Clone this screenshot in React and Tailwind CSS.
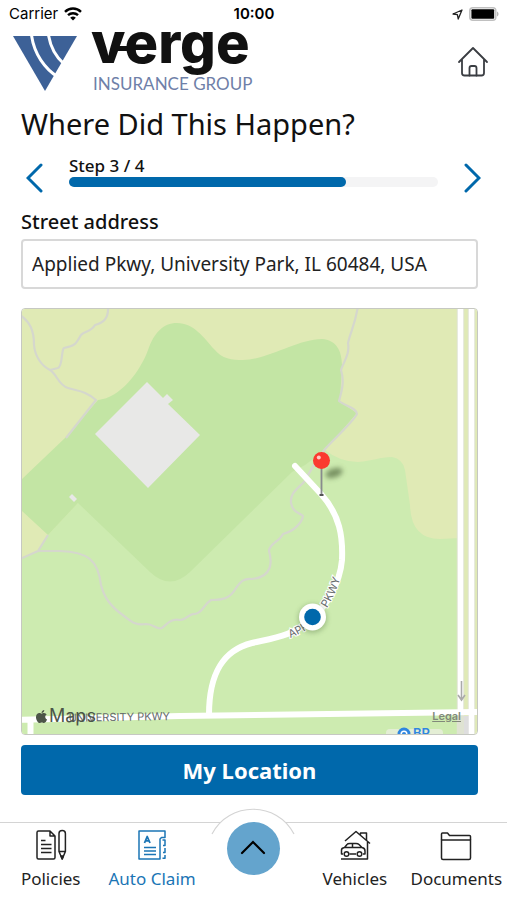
import React, { useState } from "react";
import { FaApple } from "react-icons/fa";

const STEP = 3;
const STEPS = 4;

function StatusBar() {
  return (
    <div className="grid grid-cols-3 items-center h-7 pl-[9px] pr-2 font-['Inter',sans-serif] text-[15px] leading-5 text-black">
      <div className="flex items-center gap-1.5">
        <span>Carrier</span>
        <svg width="18" height="14" viewBox="0 0 18 14" fill="none" stroke="#000" strokeWidth="2.4" aria-hidden="true">
          <path d="M1 4.8a11.4 11.4 0 0 1 16 0" />
          <path d="M4 8.2a7.2 7.2 0 0 1 10 0" />
          <path d="M9 13.6 6.2 10.8a4 4 0 0 1 5.6 0z" fill="#000" stroke="none" />
        </svg>
      </div>
      <span className="text-center font-semibold">10:00</span>
      <div className="flex items-center justify-end gap-1.5">
        <svg width="11" height="11" viewBox="0 0 11 11" fill="none" stroke="#222" strokeWidth="1.3" strokeLinejoin="round" aria-hidden="true">
          <path d="M10 1 1 5l4.400.7L6.200 10z" />
        </svg>
        <svg width="30" height="14" viewBox="0 0 30 14" aria-hidden="true">
          <rect x=".8" y=".8" width="26" height="12.400" rx="3" fill="#fff" stroke="#c0c0c0" strokeWidth="1.500" />
          <rect x="2.400" y="2.200" width="22.800" height="9.600" rx="1" fill="#000" />
          <path d="M28 4.500v5c2-.8 2-4.200 0-5z" fill="#b5b5b5" />
        </svg>
      </div>
    </div>
  );
}

function Header() {
  return (
    <header className="flex items-start justify-between h-16 pl-[13px] pr-[18px]">
      <div className="flex items-start gap-[14px]">
        <svg className="mt-2" width="64" height="55" viewBox="0 0 64 55" aria-hidden="true">
          <path d="M0 0h64L32 55z" fill="#3d6197" />
          <path d="M18.500 -1C21 18 32 33 45 41M35.500 -1C37.500 12 42 20 51 28" fill="none" stroke="#fff" strokeWidth="3" />
        </svg>
        <div className="relative flex flex-col gap-[15px]">
          <span className="-mt-px font-['Inter',sans-serif] text-[56px] leading-8 font-extrabold text-[#111]">verge</span>
          {/* bar that joins the v to the e */}
          <span className="absolute left-[22px] top-[18px] h-[5px] w-4 bg-[#111]" />
          <span className="pl-0.5 font-['Lato',sans-serif] text-[17px] leading-5 text-[#6f80a8]">INSURANCE GROUP</span>
        </div>
      </div>
      <button type="button" aria-label="Home" className="mt-[18px]">
        <svg width="32" height="32" viewBox="0 0 32 32" fill="none" stroke="#3a3d42" strokeWidth="1.800" strokeLinecap="round" strokeLinejoin="round">
          <path d="M2 16 16 2l14 14M5 13.500V27q0 2.500 2.500 2.500h17q2.500 0 2.500-2.500V13.500" />
          <path d="M12.500 29.500V22q0-2 2-2h3q2 0 2 2v7.500" />
        </svg>
      </button>
    </header>
  );
}

function Chevron({ d, label }) {
  return (
    <button type="button" aria-label={label} className="shrink-0">
      <svg width="17" height="30" viewBox="0 0 17 30" fill="none" stroke="#0068ab" strokeWidth="3" strokeLinecap="round">
        <path d={d} />
      </svg>
    </button>
  );
}

function StepProgress() {
  return (
    <div className="flex items-center gap-[26px] pl-[26px] pr-[26px] h-[34px]">
      <Chevron d="M15 2 2 15l13 13" label="Previous step" />
      <div className="flex-1 -mt-3.5">
        <div className="text-[17px] leading-[22px] font-medium">Step {STEP} / {STEPS}</div>
        <div className="h-2.5 rounded-full bg-[#f4f4f5]">
          <div className="h-full rounded-full bg-[#0068ab]" style={{ width: `${(STEP / STEPS) * 100}%` }} />
        </div>
      </div>
      <Chevron d="M2 2l13 13L2 28" label="Next step" />
    </div>
  );
}

function MapDrawing() {
  return (
    <svg className="absolute inset-0 w-full h-full" viewBox="22 309 455 425" preserveAspectRatio="xMidYMid slice" aria-hidden="true">
      <defs>
        <filter id="soft" x="-50%" y="-100%" width="200%" height="300%">
          <feGaussianBlur stdDeviation="2.500" />
        </filter>
        <path id="applied" d="M290 638C308 631 318 622 325 611Q337 594 344 565" />
      </defs>

      {/* land */}
      <path d="M0 290H520V760H0z" fill="#e0eab5" />
      <path d="M0 566 21 558 38 551 48 535 78 503 290 470 325 450Q340 462 358 462C372 461 380 457 392 457Q403 459 405 470L410 505Q411 539 440 539L460 538V740H0z" fill="#cdebb0" />
      <path d="M0 500 21 480 65 438 98 400C120 398 140 372 148 350C154 333 163 323 177 323C194 323 204 338 214 349C222 359 232 360 243 360C270 359 298 339 322 339C336 340 342 350 342 366L340 401Q347 407 357 413L325 450 305 465 292 472 190 572Q170 591 150 572L78 503 48 535 21 510 0 490z" fill="#c3e5a4" />
      <path d="M147 382 163 398 167 394 173 400 168 404 200 435 148 488 95 434z" fill="#e8e8e7" />
      <path d="M69 497 72 494 77 499 74 502z" fill="#e8e8e7" />

      {/* footpaths */}
      <g fill="none" stroke="#d5d7cd" strokeWidth="2.200" strokeLinejoin="round">
        <path d="M20 315C30 322 34 330 34 345C35 357 42 366 50 370C57 374 58 385 68 388S86 391 96 400L66 438" />
        <path d="M108 306C109 320 102 323 95 325C91 332 84 331 81 335C76 344 75 346 64 348C61 350 63 366 58 368L50 370" />
        <path d="M358 306C355 325 351 330 348 343C350 354 344 361 341 370C345 383 341 393 339 401C345 406 357 408 357 414C353 422 333 440 325 449C316 460 310 472 304 482C297 489 290 493 291 503C293 513 299 512 303 516C302 522 295 531 283 534C279 542 269 544 269 551C272 561 273 577 252 579C242 578 240 583 236 588C230 599 222 600 211 600C203 605 203 613 195 614C189 613 187 620 180 620C171 618 166 625 162 628C156 630 154 624 146 624C135 626 131 621 124 616C110 606 104 597 101 585C98 560 88 552 60 551H38L20 559M38 551 48 535" />
      </g>

      {/* roads */}
      <g fill="none" stroke="#dfe3d2" strokeWidth="7.500">
        <path d="M460.500 300V740M471.500 300V740" />
      </g>
      <path d="M464 716h7v22h-7z" fill="#dedede" />
      <g fill="none" stroke="#fff" strokeWidth="6">
        <path d="M460.500 300V714M471.500 300V740" strokeWidth="5.500" />
        <path d="M16 720 180 716 477 712M30.500 720V740" />
        <path d="M295 466 321 494C340 515 343 537 342 560C340 583 326 607 312 618C296 636 268 639 252 643C224 650 209 672 209 715" strokeLinecap="round" />
      </g>
      <path d="M461.500 681V700M458 695l3.500 5 3.500-5" fill="none" stroke="#aaa" strokeWidth="1.600" />

      {/* road names */}
      <g fontFamily="Inter, sans-serif" fontSize="11" fill="#666a6c" stroke="#fff" strokeWidth="2" paintOrder="stroke">
        <text><textPath href="#applied">APPLIED PKWY</textPath></text>
        <text x="170" y="720" textAnchor="end" transform="rotate(-1 170 720)" strokeWidth="0">UNIVERSITY PKWY</text>
      </g>

      {/* BP stop */}
      <rect x="386" y="729" width="57" height="12" rx="4" fill="#e4eed5" />
      <circle cx="404" cy="734" r="6.500" fill="#2f86e0" />
      <circle cx="404" cy="734" r="2.800" fill="none" stroke="#fff" strokeWidth="1.500" />
      <text x="413" y="738" fontFamily="Inter, sans-serif" fontSize="13" fontWeight="600" fill="#2f86e0">BP</text>

      {/* pin */}
      <ellipse cx="334" cy="473" rx="9" ry="4.500" fill="#5d7448" opacity=".75" filter="url(#soft)" transform="rotate(-18 334 473)" />
      <path d="M321.500 466V495" stroke="#888b8d" strokeWidth="1.800" />
      <path d="M319.500 495h4" stroke="#555" strokeWidth="2" />
      <circle cx="321.500" cy="460.500" r="8.500" fill="#fb3a30" />
      <circle cx="318.800" cy="457.500" r="2" fill="#ffc9c4" />

      {/* current position */}
      <circle cx="312.500" cy="618.500" r="14.500" fill="#4b6b3a" opacity=".35" filter="url(#soft)" />
      <circle cx="312.500" cy="617" r="13.500" fill="#fff" />
      <circle cx="312.500" cy="617" r="8.300" fill="#0068ab" />
    </svg>
  );
}

function LocationMap() {
  return (
    <div className="relative h-[427px] overflow-hidden rounded border border-[#c6c8c2]">
      <MapDrawing />
      <div className="absolute left-3 bottom-2 flex items-center font-['Inter',sans-serif] text-[18px] leading-5 text-[#4c5548]">
        <FaApple className="size-[15px]" aria-hidden="true" />
        <span>Maps</span>
      </div>
      <a href="#legal" className="absolute right-4 bottom-2 font-['Inter',sans-serif] text-[11px] leading-5 font-semibold text-[#81897a] underline">
        Legal
      </a>
    </div>
  );
}

function PoliciesIcon() {
  return (
    <svg width="32" height="32" viewBox="0 0 32 32" fill="none" stroke="#222" strokeWidth="1.500" strokeLinejoin="round" aria-hidden="true">
      <path d="M15 2H3.500Q2 2 2 3.500v25Q2 30 3.500 30h15q1.500 0 1.500-1.500V7zM15 2v5h5" />
      <path d="M6 11.500h4.500M6 15.500h10.500M6 19.500h10.500M6 23.500h10.500" />
      <path d="M24 22.500V4.500q0-3 3.200-3t3.200 3v18L27.200 30zM24 22.500h6.400" />
      <path d="m26 27 1.200 3 1.200-3z" fill="#222" />
    </svg>
  );
}

function ClaimIcon() {
  return (
    <svg width="32" height="32" viewBox="0 0 32 32" fill="none" stroke="#1b75b5" strokeWidth="1.500" strokeLinejoin="round" aria-hidden="true">
      <path d="M29 8.500V2H3v28h21V10l1.500-1.500z" />
      <path d="M26.500 11H29v5.500h-2M29 19v4.500h-2M29 26v3.200h-2.500" />
      <path d="M8 18.500h12M8 22h12M8 25.500h12" />
      <path d="m8.500 14 2.700-6.500L14 14M9.500 11.800h3.500" strokeWidth="1.800" />
    </svg>
  );
}

function VehiclesIcon() {
  return (
    <svg width="32" height="32" viewBox="0 0 32 32" fill="none" stroke="#222" strokeWidth="1.500" strokeLinejoin="round" aria-hidden="true">
      <path d="M6 12 17 2.500 31 14.500M21.500 5.500V4h6v7.500M28.500 13v17H2" />
      <path d="M4 25H2.500v-4q0-2 3-2.500l2.500-3Q8.500 14.500 11 14.500h6q2 0 3 1l3 3q3 .5 3 3.500v3h-2M6 18.500h17M13.500 14.500v4M10.500 25h6.500" />
      <circle cx="7.500" cy="25" r="2.300" />
      <circle cx="20.500" cy="25" r="2.300" />
    </svg>
  );
}

function DocumentsIcon() {
  return (
    <svg width="32" height="32" viewBox="0 0 32 32" fill="none" stroke="#222" strokeWidth="1.500" strokeLinejoin="round" aria-hidden="true">
      <path d="M1.500 11V5q0-1 1-1h5L9.500 6.500h20q1 0 1 1V11" />
      <path d="M1.500 11h29v18q0 1.500-1.500 1.500H3Q1.500 30.500 1.500 29z" />
    </svg>
  );
}

function NavLink({ icon, label, active }) {
  return (
    <a href={`#${label}`} className={`flex flex-col items-center gap-1.5 pt-[6px] text-[17px] leading-6 whitespace-nowrap ${active ? "text-[#1b75b5]" : "text-[#222]"}`}>
      {icon}
      <span>{label}</span>
    </a>
  );
}

function BottomNav() {
  return (
    <nav className="relative grid grid-cols-5 h-[78px] border-t border-[#d4d4d4]">
      <NavLink icon={<PoliciesIcon />} label="Policies" />
      <NavLink icon={<ClaimIcon />} label="Auto Claim" active />
      <div className="relative flex justify-center">
        <svg className="absolute -top-[15px] left-1/2 -translate-x-1/2" width="86" height="60" viewBox="0 0 86 60" aria-hidden="true">
          <path d="M2 26C19 -7 67 -7 84 26V60H2z" fill="#fff" />
          <path d="M2 26C19 -7 67 -7 84 26" fill="none" stroke="#d4d4d4" strokeWidth="1.200" />
        </svg>
        <button type="button" aria-label="More" className="relative -mt-px size-[53px] rounded-full bg-[#64a4cd] flex items-center justify-center">
          <svg width="26" height="16" viewBox="0 0 26 16" fill="none" stroke="#000" strokeWidth="2.200" strokeLinecap="round" className="-mt-1">
            <path d="M2 14 13 3l11 11" />
          </svg>
        </button>
      </div>
      <NavLink icon={<VehiclesIcon />} label="Vehicles" />
      <NavLink icon={<DocumentsIcon />} label="Documents" />
    </nav>
  );
}

export default function App() {
  const [address, setAddress] = useState("Applied Pkwy, University Park, IL 60484, USA");

  return (
    <div className="min-h-screen flex flex-col bg-white font-['Noto_Sans',sans-serif] text-[#111]">
      <StatusBar />
      <Header />
      <h1 className="pl-[21px] pt-3 text-[29px] leading-10">Where Did This Happen?</h1>
      <div className="pt-[17px]">
        <StepProgress />
      </div>
      <main className="flex-1 flex flex-col pl-[21px] pr-[29px] pt-[13px]">
        <label htmlFor="street" className="text-[20px] leading-7 font-medium">Street address</label>
        <input
          id="street"
          type="text"
          value={address}
          onChange={(e) => setAddress(e.target.value)}
          className="mt-[3px] h-[50px] w-full rounded-sm border-2 border-[#d8d8d8] px-[9px] text-[19px] text-[#222]"
        />
        <div className="pt-[19px] pb-2.5">
          <LocationMap />
        </div>
        <button type="button" className="h-[50px] w-full rounded bg-[#0068ab] text-[22px] font-bold text-white">
          My Location
        </button>
      </main>
      <BottomNav />
    </div>
  );
}
